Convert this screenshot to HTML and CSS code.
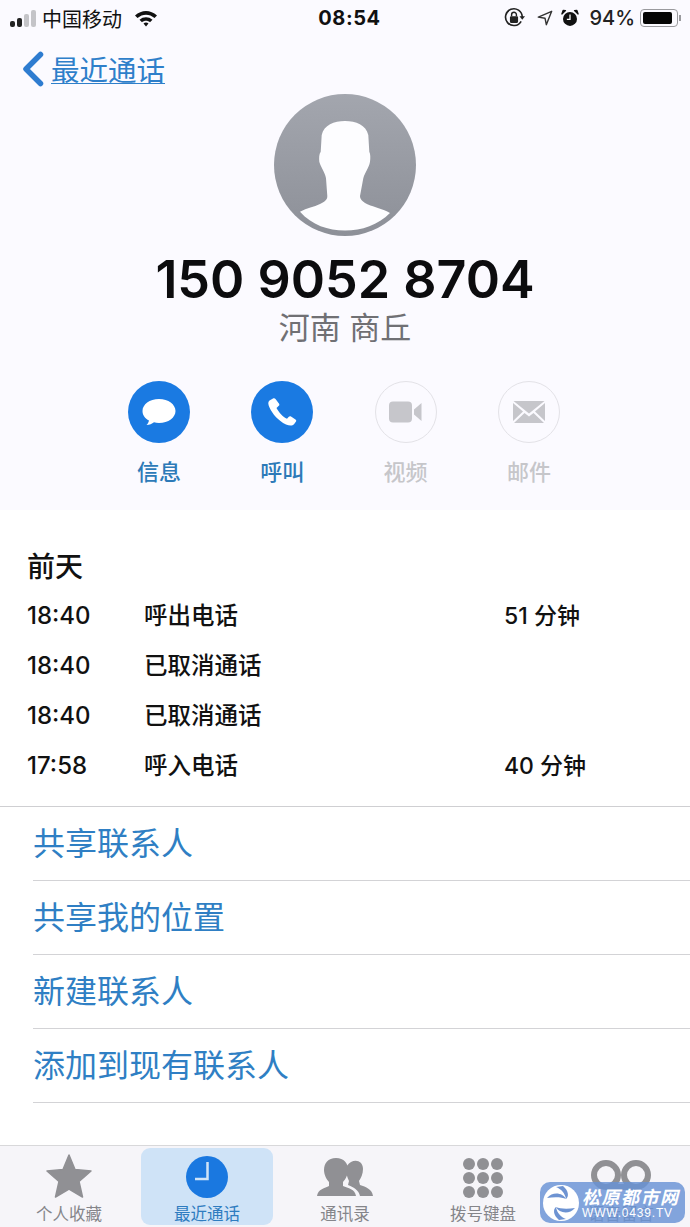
FILE: index.html
```html
<!DOCTYPE html>
<html lang="zh-CN">
<head>
  <meta charset="UTF-8">
  <meta name="viewport" content="width=device-width, initial-scale=1.0">
  <title>最近通话</title>
  <link rel="stylesheet" href="styles.css">
</head>
<body>
  <div class="phone">
    <!-- Top part with the contact -->
    <div class="head">
      <div class="status">
        <div class="status-left">
          <div class="signal"><i></i><i></i><i class="off"></i><i class="off"></i></div>
          <span>中国移动</span>
          <svg class="wifi" viewBox="0 0 24 18"><path d="M1 6.500C7.500.5 16.500.5 23 6.500L20.500 9C15.500 4.500 8.500 4.500 3.500 9Z"/><path d="M5.500 10.800C9.300 7.500 14.700 7.500 18.500 10.800L16 13.300C13.700 11.300 10.300 11.300 8 13.300Z"/><path d="M9.500 14.500C11 13.300 13 13.300 14.500 14.500L12 17.500Z"/></svg>
        </div>
        <div class="status-time">08:54</div>
        <div class="status-right">
          <svg class="ico-lock" viewBox="0 0 20 20"><path d="M16.500 13A7.600 7.600 0 1 1 17.500 9" fill="none" stroke="#222" stroke-width="1.500"/><path d="M15 8.500h5l-2.500 3z" fill="#222"/><rect x="6.300" y="8.500" width="7.400" height="6" rx="1" fill="#222"/><path d="M7.800 8.500V7a2.200 2.200 0 0 1 4.400 0v1.500" fill="none" stroke="#222" stroke-width="1.300"/></svg>
          <svg class="ico-arrow" viewBox="0 0 18 18"><path d="M16.500 1.500L1.500 8l7.500 1.200L10.500 16.500Z" fill="none" stroke="#333" stroke-width="1.600" stroke-linejoin="round"/></svg>
          <svg class="ico-alarm" viewBox="0 0 20 20"><circle cx="10" cy="11" r="7.800" fill="#111"/><path d="M1 5.500L5 1.800 2.500 1.500ZM19 5.500L15 1.800 17.500 1.500Z" fill="#111" stroke="#111" stroke-width="1.500" stroke-linejoin="round"/><path d="M10 6v5.500H6.500" fill="none" stroke="#fff" stroke-width="1.400"/></svg>
          <span>94%</span>
          <div class="battery"><div class="battery-fill"></div></div>
          <div class="battery-tip"></div>
        </div>
      </div>

      <div class="nav">
        <svg class="chevron" viewBox="0 0 24 36"><path d="M19.500 3.500L5 18l14.500 14.500" fill="none" stroke="#2e7cd0" stroke-width="5.500" stroke-linecap="round" stroke-linejoin="round"/></svg>
        <span class="nav-link">最近通话</span>
      </div>

      <div class="contact">
        <svg class="avatar" viewBox="0 0 142 142">
          <defs><linearGradient id="avatar-grad" x1="0" y1="0" x2="0" y2="1"><stop offset="0" stop-color="#a3a6ae"/><stop offset="1" stop-color="#8d9098"/></linearGradient></defs>
          <circle cx="71" cy="71" r="71" fill="url(#avatar-grad)"/>
          <path d="M71 27C60 27 50 31 47.700 41L46.700 57.700C45 60 45 64 45.300 67.700C47 74 51 78 52 84.300L53.300 102C53.500 106 50 108 46 110C40 113 33 114 26 117.700C38 131 54 136.500 71 136.500C88 136.500 104 131 116 119C109 115 100 113 94 110.500C90 108.500 86 106 86 102L89.300 84.300C91 78 95 74 96 67.700C96.500 64 96.500 60 95.300 57.700L94.300 41C92 31 82 27 71 27Z" fill="#fdfdff"/>
        </svg>
        <div class="number">150 9052 8704</div>
        <div class="place">河南 商丘</div>
      </div>

      <div class="actions">
        <div class="action">
          <div class="action-btn on">
            <svg viewBox="0 0 36 32" width="36" height="32"><path d="M18 3C8.500 3 1.500 8.500 1.500 15C1.500 19 4 22.500 8 24.500C7.500 26.500 6.500 28 5.500 29C8.500 29 11 27.800 13 26.300C14.500 26.700 16.200 27 18 27C27.500 27 34.500 21.500 34.500 15C34.500 8.500 27.500 3 18 3Z" fill="#fff"/></svg>
          </div>
          <div class="action-label on">信息</div>
        </div>
        <div class="action">
          <div class="action-btn on">
            <svg viewBox="0 0 32 32" width="32" height="32"><path d="M7 2.500L3.500 4.500C1.800 5.800 2 8.500 3.500 11.500C6.500 18 12 24.500 20 28.500C23.500 30 26.500 30 28 28.300L30 25.500C30.500 24.700 30.200 24 29.500 23.500L25 20.500C24.200 20 23.400 20.100 22.800 20.800L21 22.800C17 21 12.500 16 10.500 12L12.800 9.800C13.400 9.200 13.500 8.500 13.100 7.700L9.500 3C8.900 2.200 8 2 7 2.500Z" fill="#fff"/></svg>
          </div>
          <div class="action-label on">呼叫</div>
        </div>
        <div class="action">
          <div class="action-btn">
            <svg viewBox="0 0 34 22" width="34" height="22"><rect x="0" y="0.500" width="23" height="21" rx="4" fill="#c6c6cb"/><path d="M25 8.500L32.500 2V20L25 13.500Z" fill="#c6c6cb"/></svg>
          </div>
          <div class="action-label">视频</div>
        </div>
        <div class="action">
          <div class="action-btn">
            <svg viewBox="0 0 32 22" width="32" height="22"><path d="M0.500 0H31.500L16 12.500Z" fill="#c6c6cb"/><path d="M0 2L10 10.500L0 20ZM32 2L22 10.500L32 20Z" fill="#c6c6cb"/><path d="M1 22L11.500 12L16 15.500L20.500 12L31 22Z" fill="#c6c6cb"/></svg>
          </div>
          <div class="action-label">邮件</div>
        </div>
      </div>
    </div>

    <!-- Call history -->
    <div class="calls">
      <div class="calls-day">前天</div>
      <div class="call"><span class="call-time">18:40</span><span class="call-type">呼出电话</span><span class="call-len">51 分钟</span></div>
      <div class="call"><span class="call-time">18:40</span><span class="call-type">已取消通话</span></div>
      <div class="call"><span class="call-time">18:40</span><span class="call-type">已取消通话</span></div>
      <div class="call"><span class="call-time">17:58</span><span class="call-type">呼入电话</span><span class="call-len">40 分钟</span></div>
    </div>

    <div class="links">
      <div class="link">共享联系人</div>
      <div class="link">共享我的位置</div>
      <div class="link">新建联系人</div>
      <div class="link">添加到现有联系人</div>
    </div>

    <!-- Bottom tabs -->
    <div class="tabs">
      <div class="tab">
        <svg class="tab-icon" viewBox="0 0 46 44" width="46" height="44"><path d="M23 1L29 15.500L45 17L33 27.500L36.500 43L23 35L9.500 43L13 27.500L1 17L17 15.500Z" fill="#909094" stroke="#909094" stroke-width="1.500" stroke-linejoin="round"/></svg>
        <span>个人收藏</span>
      </div>
      <div class="tab active">
        <svg class="tab-icon" viewBox="0 0 42 42" width="42" height="42"><circle cx="21" cy="21" r="21" fill="#1a78e0"/><path d="M21.500 6V23H9" fill="none" stroke="#cfe3f7" stroke-width="2.500"/></svg>
        <span>最近通话</span>
      </div>
      <div class="tab">
        <svg class="tab-icon" viewBox="0 0 56 40" width="56" height="40"><path d="M34 4C39 1 46 3 46 11C46 16 44 20 42 23L43 27C49 29 55 31 56 38H43C42 32 36 29 31 27L32 23C30 19 29 15 29 11C29 8 31 6 34 4Z" fill="#909094"/><path d="M19 0C27 0 31 5 31 12C31 17 28 22 26 24V28C31 30 38 31 39 38H0C1 31 8 30 12 28V24C10 22 7 17 7 12C7 5 11 0 19 0Z" fill="#909094"/></svg>
        <span>通讯录</span>
      </div>
      <div class="tab">
        <div class="keypad tab-icon"><i></i><i></i><i></i><i></i><i></i><i></i><i></i><i></i><i></i></div>
        <span>拨号键盘</span>
      </div>
      <div class="tab">
        <svg class="tab-icon" viewBox="0 0 60 30" width="60" height="30"><circle cx="15" cy="15" r="12" fill="none" stroke="#909094" stroke-width="6"/><circle cx="45" cy="15" r="12" fill="none" stroke="#909094" stroke-width="6"/><path d="M15 27H45" stroke="#909094" stroke-width="6"/></svg>
        <span>语音留言</span>
      </div>
    </div>

    <!-- Site watermark on top of the last tab -->
    <div class="mark">
      <svg class="mark-logo" viewBox="0 0 36 36" width="36" height="36"><circle cx="18" cy="18" r="18" fill="#fff"/><path d="M4 13C10 6 20 8 23 14C19 12 11 12 4 13ZM32 23C26 30 16 28 13 22C17 24 25 24 32 23Z" fill="#6d93d2"/><path d="M20 1C26 6 26 12 23 14C22 8 18 4 13 2ZM16 35C10 30 10 24 13 22C14 28 18 32 23 34Z" fill="#6d93d2"/></svg>
      <div class="mark-text">
        <div class="mark-name">松原都市网</div>
        <div class="mark-url">WWW.0439.TV</div>
      </div>
    </div>
  </div>
</body>
</html>
```

FILE: styles.css
```css
* {
  box-sizing: border-box;
}
html, body {
  margin: 0;
  padding: 0;
}
body {
  width: 690px;
  height: 1227px;
  overflow: hidden;
  background: #ffffff;
  font-family: Inter, "Noto Sans CJK SC", sans-serif;
  color: #111111;
}
.phone {
  position: relative;
  display: flex;
  flex-direction: column;
  height: 1227px;
}

.head {
  height: 510px;
  background: #fbfaff;
}
.status {
  display: flex;
  align-items: center;
  justify-content: space-between;
  height: 36px;
  padding: 0 9px 0 10px;
  font-size: 20px;
}
.status-left {
  display: flex;
  align-items: center;
  width: 200px;
}
.signal {
  display: flex;
  align-items: flex-end;
  gap: 2px;
  margin-right: 6px;
}
.signal i {
  width: 5px;
  background: #222222;
  border-radius: 2px;
}
.signal i:nth-child(1) { height: 6px; }
.signal i:nth-child(2) { height: 9px; }
.signal i:nth-child(3) { height: 13px; }
.signal i:nth-child(4) { height: 17px; }
.signal i.off {
  background: #c4c4c8;
}
.wifi {
  width: 24px;
  height: 18px;
  margin-left: 12px;
  fill: #111111;
}
.status-time {
  margin-left: 8px;
  font-weight: 700;
  font-size: 20px;
  letter-spacing: 0.600px;
}
.status-right {
  display: flex;
  align-items: center;
  justify-content: flex-end;
  width: 200px;
  font-weight: 500;
}
.ico-lock {
  width: 22px;
  height: 22px;
  margin-right: 12px;
}
.ico-arrow {
  width: 16px;
  height: 16px;
  margin-right: 8px;
}
.ico-alarm {
  width: 18px;
  height: 18px;
  margin-right: 10px;
}
.status-right span {
  color: #222222;
  margin-right: 5px;
}
.battery {
  width: 38px;
  height: 18px;
  padding: 2px;
  border: 1px solid #9a9a9e;
  border-radius: 4px;
}
.battery-fill {
  width: 92%;
  height: 100%;
  background: #050505;
  border-radius: 2px;
}
.battery-tip {
  width: 2px;
  height: 6px;
  margin-left: 1px;
  background: #9a9a9e;
}

.nav {
  display: flex;
  align-items: center;
  height: 66px;
  padding-left: 21px;
}
.chevron {
  width: 24px;
  height: 36px;
}
.nav-link {
  margin-left: 6px;
  margin-bottom: 2px;
  font-size: 28.500px;
  color: #2e7fca;
  text-decoration: underline;
  text-underline-offset: 2px;
  text-decoration-thickness: 1px;
}

.contact {
  display: flex;
  flex-direction: column;
  align-items: center;
  margin-top: -8px;
}
.avatar {
  width: 142px;
  height: 142px;
}
.number {
  margin-top: 12px;
  font-size: 52px;
  line-height: 63px;
  font-weight: 600;
  color: #0c0c0e;
}
.place {
  font-size: 31px;
  line-height: 34px;
  color: #707074;
}

.actions {
  display: flex;
  padding-left: 128px;
  margin-top: 36px;
}
.action {
  display: flex;
  flex-direction: column;
  align-items: center;
  width: 62px;
  margin-right: 61.300px;
}
.action-btn {
  display: flex;
  align-items: center;
  justify-content: center;
  width: 62px;
  height: 62px;
  border: 1px solid #e3e2e7;
  border-radius: 50%;
}
.action-btn.on {
  background: #1a7ae2;
  border: none;
}
.action-label {
  margin-top: 14px;
  font-size: 22px;
  line-height: 30px;
  font-weight: 500;
  color: #c6c6ca;
}
.action-label.on {
  color: #2d7ab8;
}

.calls {
  height: 297px;
  padding: 37px 0 0 27px;
  border-bottom: 1px solid #cfcfd2;
}
.calls-day {
  font-size: 28px;
  line-height: 40px;
  font-weight: 500;
  margin-bottom: 2px;
}
.call {
  display: flex;
  align-items: center;
  height: 50px;
  font-size: 23.500px;
}
.call-time {
  width: 117px;
  padding-top: 2px;
  font-size: 24px;
  font-weight: 500;
}
.call-type {
  width: 360px;
  font-weight: 500;
}
.call-len {
  font-weight: 500;
  font-size: 23px;
}

.links {
  padding-left: 33px;
}
.link {
  height: 74px;
  line-height: 73px;
  font-size: 32px;
  color: #2f7fc4;
  border-bottom: 1px solid #d3d3d6;
}

.tabs {
  position: absolute;
  left: 0;
  right: 0;
  bottom: 0;
  display: flex;
  height: 82px;
  background: #f6f5f9;
  border-top: 1px solid #d8d8da;
}
.tab {
  flex: 1;
  display: flex;
  flex-direction: column;
  align-items: center;
  justify-content: flex-end;
  margin: 2px 3px 2px;
  padding-bottom: 1px;
  border-radius: 9px;
  font-size: 16.500px;
  line-height: 20px;
  color: #85858a;
}
.tab-icon {
  flex: none;
  margin-bottom: 6px;
}
.tab:last-child .tab-icon {
  margin-bottom: 14px;
}
.tab.active {
  background: #cfe3f7;
  color: #2e7cc0;
}
.keypad {
  display: grid;
  grid-template-columns: repeat(3, 12px);
  gap: 2px;
}
.keypad i {
  width: 12px;
  height: 12px;
  background: #909094;
  border-radius: 50%;
}

.mark {
  position: absolute;
  left: 540px;
  top: 1182px;
  display: flex;
  align-items: center;
  width: 145px;
  height: 41px;
  padding-left: 3px;
  background: rgba(104, 146, 214, 0.82);
  border-radius: 10px;
  color: #ffffff;
  white-space: nowrap;
}
.mark-logo {
  flex: none;
}
.mark-text {
  margin-left: 3px;
}
.mark-name {
  font-family: "Noto Sans CJK SC", sans-serif;
  font-size: 18px;
  line-height: 22px;
  font-weight: 700;
  font-style: italic;
  letter-spacing: 1.500px;
}
.mark-url {
  font-family: "Liberation Sans", sans-serif;
  font-size: 12px;
  line-height: 13px;
  letter-spacing: 0.800px;
}
```
